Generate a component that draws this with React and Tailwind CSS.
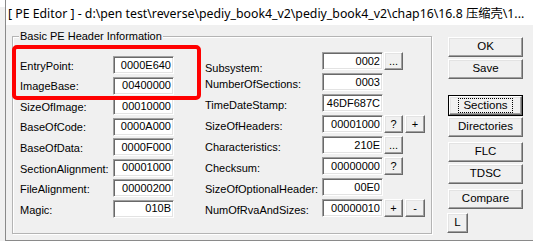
const leftRows = [
  ["EntryPoint:", "0000E640"],
  ["ImageBase:", "00400000"],
  ["SizeOfImage:", "00010000"],
  ["BaseOfCode:", "0000A000"],
  ["BaseOfData:", "0000F000"],
  ["SectionAlignment:", "00001000"],
  ["FileAlignment:", "00000200"],
  ["Magic:", "010B"],
];

const rightRows = [
  ["Subsystem:", "0002", ["..."]],
  ["NumberOfSections:", "0003", []],
  ["TimeDateStamp:", "46DF687C", []],
  ["SizeOfHeaders:", "00001000", ["?", "+"]],
  ["Characteristics:", "210E", ["..."]],
  ["Checksum:", "00000000", ["?"]],
  ["SizeOfOptionalHeader:", "00E0", []],
  ["NumOfRvaAndSizes:", "00000010", ["+", "-"]],
];

function Field({ value }) {
  return (
    <div className="w-[61px] h-[18px] shrink-0 bg-white border border-t-[#a0a0a0] border-l-[#a0a0a0] border-b-white border-r-white shadow-[inset_1px_1px_0_#696969,inset_-1px_-1px_0_#e3e3e3] flex items-center justify-end pr-[2px] leading-none text-[11px]">
      {value}
    </div>
  );
}

function Btn({ children, className = "" }) {
  return (
    <div
      className={`bg-[#f0f0f0] border border-t-white border-l-white border-b-[#696969] border-r-[#696969] shadow-[inset_-1px_-1px_0_#a0a0a0,inset_1px_1px_0_#e3e3e3] flex items-center justify-center leading-none ${className}`}
    >
      {children}
    </div>
  );
}

export default function App() {
  return (
    <div className="relative w-[533px] h-[244px] overflow-hidden bg-white font-['Liberation_Sans',sans-serif] text-[11px] text-black">
      <div className="flex h-[241px]">
        <div className="w-[5px] mt-[7px] bg-[#f0f0f0]"></div>
        <div className="flex-1 flex flex-col border-l border-b border-[#8a8a8a] bg-[#f0f0f0]">
          <div className="h-[25px] bg-white flex items-center pl-[2px] pt-[3px] whitespace-nowrap overflow-hidden font-['Noto_Sans','Noto_Sans_CJK_SC',sans-serif] text-[12.3px]">
            [ PE Editor ] - d:\pen test\reverse\pediy_book4_v2\pediy_book4_v2\chap16\16.8 压缩壳\1...
          </div>
          <div className="flex flex-1">
            <div className="relative ml-[6px] mt-[11px] w-[420px] h-[198px] border border-[#b4b4b4] shadow-[inset_1px_1px_0_#fff,1px_1px_0_#fff] flex">
              <span className="absolute left-[6px] top-[-8px] px-[1px] bg-[#f0f0f0] leading-[14px] text-[11px]">
                Basic PE Header Information
              </span>
              <div className="mt-[19px] ml-[7px] h-[162px] flex flex-col justify-between">
                {leftRows.map(([label, value]) => (
                  <div key={label} className="flex items-center h-[18px]">
                    <span className="w-[93px] mt-[2px]">{label}</span>
                    <Field value={value} />
                  </div>
                ))}
              </div>
              <div className="mt-[15px] ml-[31px] h-[165px] flex flex-col justify-between">
                {rightRows.map(([label, value, btns], i) => (
                  <div key={label} className="flex items-center h-[18px]">
                    <span className={`w-[117px] ${i === 0 ? "mt-[14px]" : "mt-[4px]"}`}>{label}</span>
                    <Field value={value} />
                    {btns.map((b, j) => (
                      <Btn
                        key={b + j}
                        className={`h-[18px] ${j === 0 ? "ml-[1px] w-[19px]" : "ml-[2px] w-[20px]"}`}
                      >
                        {b}
                      </Btn>
                    ))}
                  </div>
                ))}
              </div>
            </div>
            <div className="ml-[16px] mt-[12px] flex flex-col w-[75px] text-[11.5px]">
              <Btn className="h-[20px]">OK</Btn>
              <Btn className="h-[20px] mt-[2px]">Save</Btn>
              <div className="h-[21px] mt-[16px] border border-black">
                <Btn className="h-full">
                  <span className="border border-dotted border-black px-[4px] leading-[13px]">Sections</span>
                </Btn>
              </div>
              <Btn className="h-[20px] mt-[1px]">Directories</Btn>
              <Btn className="h-[20px] mt-[5px]">FLC</Btn>
              <Btn className="h-[20px] mt-[2px]">TDSC</Btn>
              <Btn className="h-[20px] mt-[5px]">Compare</Btn>
              <Btn className="h-[20px] w-[21px] mt-[4px] -ml-[1px]">L</Btn>
            </div>
          </div>
        </div>
      </div>
      <div className="absolute left-[12px] top-[45px] w-[189px] h-[55px] border-4 border-[#f00] rounded-[5px]"></div>
    </div>
  );
}
